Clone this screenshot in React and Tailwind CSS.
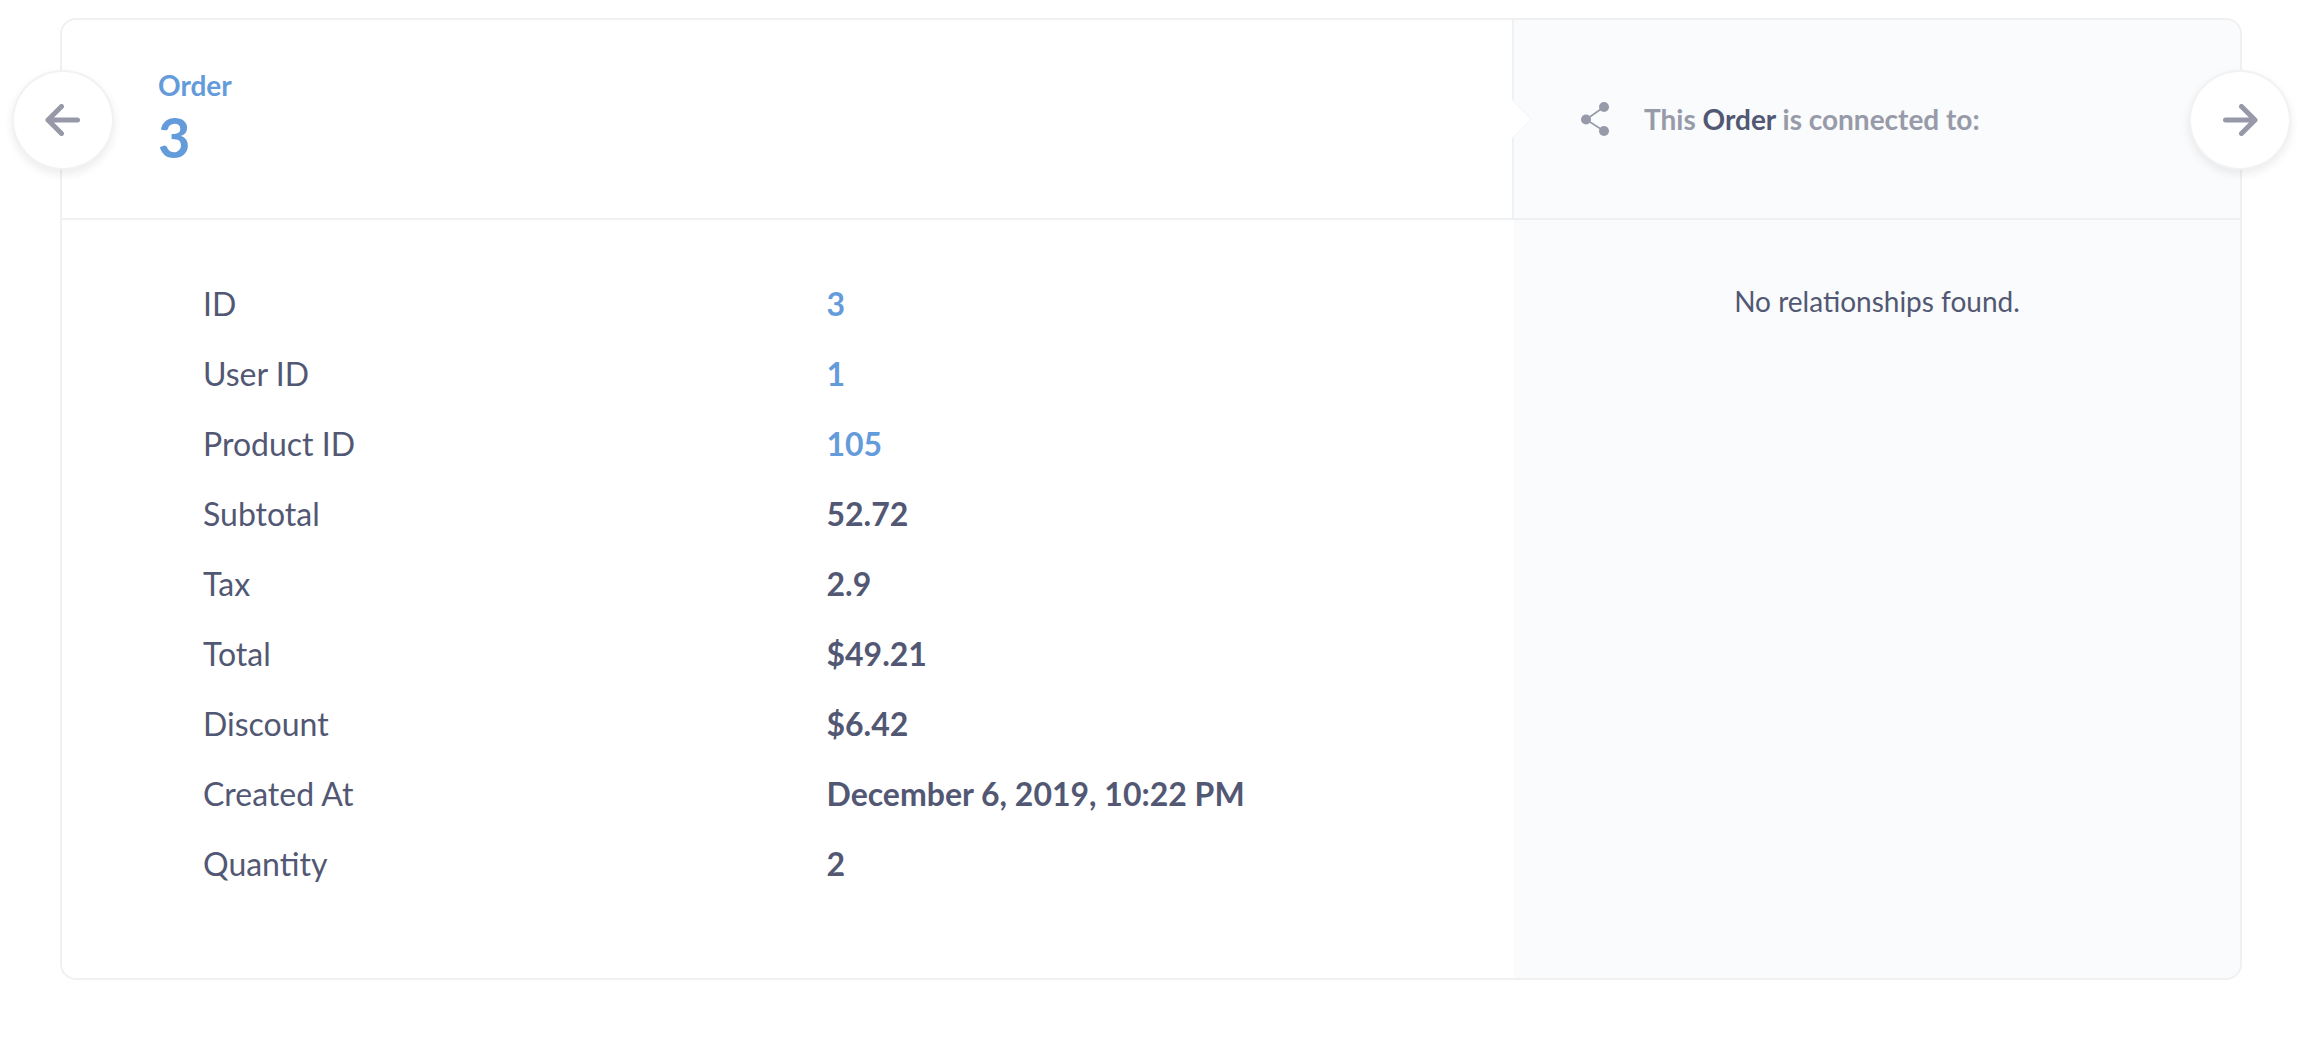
const fields = [
  { label: "ID", value: "3", link: true },
  { label: "User ID", value: "1", link: true },
  { label: "Product ID", value: "105", link: true },
  { label: "Subtotal", value: "52.72" },
  { label: "Tax", value: "2.9" },
  { label: "Total", value: "$49.21" },
  { label: "Discount", value: "$6.42" },
  { label: "Created At", value: "December 6, 2019, 10:22 PM" },
  { label: "Quantity", value: "2" },
];

function ArrowIcon({ className }) {
  return (
    <svg viewBox="0 0 36 32" className={className} fill="none" aria-hidden="true">
      <path
        d="M16.5 2.5 L3 16 L16.5 29.5 M3 16 H32.5"
        stroke="currentColor"
        strokeWidth="5"
        strokeLinecap="round"
        strokeLinejoin="round"
      />
    </svg>
  );
}

function ShareIcon() {
  return (
    <svg viewBox="0 0 28 34" className="h-[34px] w-7 shrink-0" aria-hidden="true">
      <path d="M23 5 L5 17.5 L23 29" fill="none" stroke="currentColor" strokeWidth="1.6" />
      <circle cx="23" cy="5" r="5" fill="currentColor" />
      <circle cx="5" cy="17.5" r="5" fill="currentColor" />
      <circle cx="23" cy="29" r="5" fill="currentColor" />
    </svg>
  );
}

const roundButton =
  "absolute top-[50px] flex h-[100px] w-[102px] items-center justify-center rounded-[50%] border-2 border-[#f2f2f2] bg-white text-[#9799a8] shadow-[0_4px_10px_rgba(0,0,0,0.08)]";

export default function App() {
  return (
    <main className="bg-white pt-[18px] pr-[62px] pb-[60px] pl-[60px] font-['Lato',sans-serif] text-[#525873]">
      <article className="relative rounded-2xl border-2 border-[#f0f0f0]">
        <header className="grid grid-cols-3 border-b-2 border-[#eff0f1]">
          <div className="relative col-span-2 flex h-[198px] flex-col justify-center border-r-2 border-[#f0f1f2] pt-1 pl-24 font-bold text-[#649bda]">
            <p className="text-[28px] leading-8">Order</p>
            <h1 className="text-[56px] leading-[72px]">3</h1>
            <svg
              viewBox="0 0 20 38"
              className="absolute top-20 -right-5 h-[38px] w-5"
              aria-hidden="true"
            >
              <path d="M0 0 L2 1 L19 19 L2 37 L0 38 Z" fill="#ffffff" />
              <path d="M1 1 L19 19 L1 37" fill="none" stroke="#f3f4f5" strokeWidth="1" />
            </svg>
          </div>
          <div className="flex items-center gap-[35px] rounded-tr-[14px] bg-[#f9fbfc] pl-[67px] text-[#979aa8]">
            <ShareIcon />
            <h2 className="text-[28px] leading-10 font-bold">
              This <span className="text-[#525873]">Order</span> is connected to:
            </h2>
          </div>
        </header>
        <div className="grid grid-cols-3">
          <div className="col-span-2 pt-[49px] pr-16 pb-[79px] pl-[141px]">
            <table className="w-full table-fixed text-left text-[32px] leading-10">
              <tbody>
                {fields.map((field) => (
                  <tr key={field.label} className="h-[70px]">
                    <th scope="row" className="p-0 font-normal">
                      {field.label}
                    </th>
                    <td className="p-0 font-bold">
                      {field.link ? (
                        <a href="#" className="text-[#649bda]">
                          {field.value}
                        </a>
                      ) : (
                        field.value
                      )}
                    </td>
                  </tr>
                ))}
              </tbody>
            </table>
          </div>
          <aside className="rounded-br-[14px] bg-[#f9fbfc] pt-[61px] text-center text-[28px] leading-10">
            No relationships found.
          </aside>
        </div>
        <button type="button" aria-label="Previous" className={`${roundButton} -left-[50px]`}>
          <ArrowIcon className="h-8 w-9" />
        </button>
        <button type="button" aria-label="Next" className={`${roundButton} -right-[51px]`}>
          <ArrowIcon className="h-8 w-9 rotate-180" />
        </button>
      </article>
    </main>
  );
}
